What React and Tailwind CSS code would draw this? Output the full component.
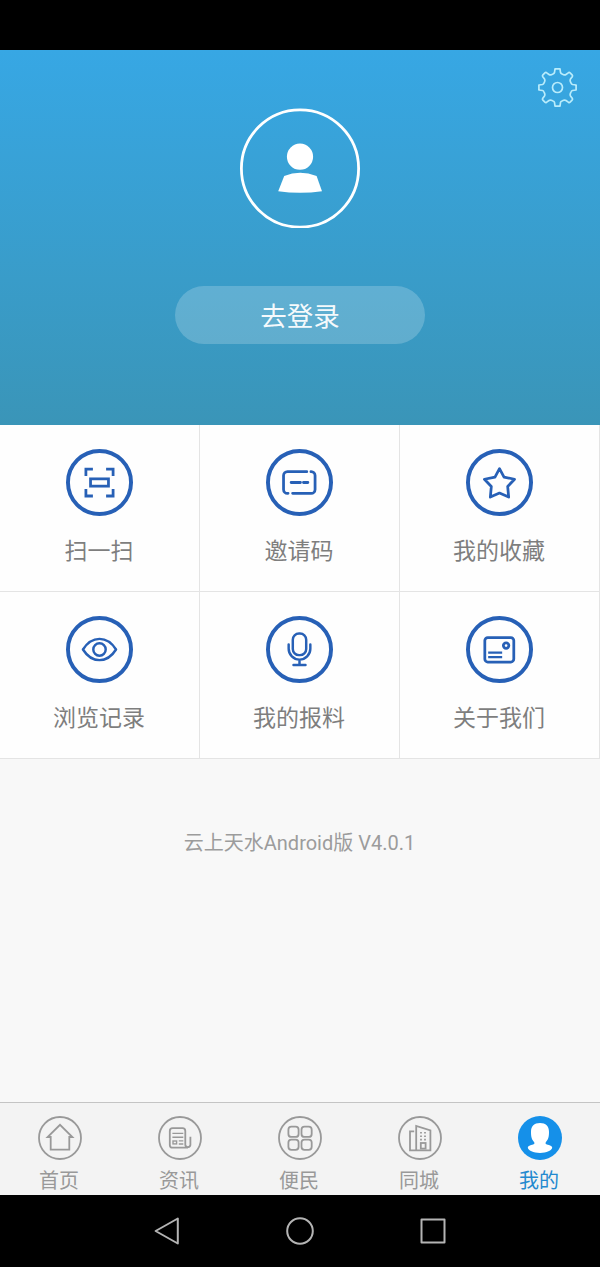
import React from 'react';

const menuItems = [
  {
    label: "扫一扫",
    icon: (
      <>
        <path d="M20.2 27.5V20.4h7.1M40.7 20.4h7.1v7.1M47.8 40.6v7.1h-7.1M27.3 47.7h-7.1v-7.1" />
        <rect x="24.9" y="30.3" width="18.2" height="7.4" />
      </>
    ),
  },
  {
    label: "邀请码",
    icon: (
      <g strokeLinecap="round">
        <path d="M41.4 23H21.8a4 4 0 0 0-4 4v14a4 4 0 0 0 4 4h.6" />
        <path d="M45.6 23h.2a4 4 0 0 1 4 4v14a4 4 0 0 1-4 4H27" />
        <path d="M25.5 34h9.5M38 34h4.5" />
      </g>
    ),
  },
  {
    label: "我的收藏",
    icon: (
      <path
        strokeLinejoin="round"
        d="M34 20l4.6 8.5 10.7 2.2-7 7.3 1 10.8-9.3-4.1-9.3 4.1 1-10.8-7-7.3 10.7-2.2z"
      />
    ),
  },
  {
    label: "浏览记录",
    icon: (
      <g strokeWidth="2.5" strokeLinejoin="round">
        <path d="M17.2 34C21 28 27 23.2 34 23.2S47 28 50.8 34C47 40 41 44.8 34 44.8S21 40 17.2 34z" />
        <circle cx="34" cy="34" r="6.3" />
      </g>
    ),
  },
  {
    label: "我的报料",
    icon: (
      <g strokeWidth="2.5" strokeLinecap="round">
        <rect x="27.2" y="17.7" width="13.6" height="22" rx="6.3" />
        <path d="M23 29v4.3a11 11 0 0 0 22 0V29M34 44.4v5.2M27.9 49.8h12.2" />
      </g>
    ),
  },
  {
    label: "关于我们",
    icon: (
      <>
        <rect x="19.1" y="21.9" width="29.4" height="24.8" rx="3" />
        <circle cx="40.7" cy="30" r="2.8" />
        <path strokeWidth="2.4" d="M22.5 37.2h14.2M22.5 41.8h14.2" />
      </>
    ),
  },
];

const tabs = [
  {
    label: "首页",
    icon: <path d="M12.7 21H9.6L22 8.8 34.4 21h-3.1v12.6H12.7z" />,
  },
  {
    label: "资讯",
    icon: (
      <>
        <path d="M30 31.7H14.6a2.8 2.8 0 0 1-2.8-2.8V15a2.8 2.8 0 0 1 2.8-2.8h9.9a2.8 2.8 0 0 1 2.8 2.8v14a2.6 2.6 0 0 0 5.1 0v-8.3" />
        <path strokeWidth="1.4" d="M14.4 17.4h10.9M14.4 21.2h10.9M20.8 24.9h4.5M20.8 28h4.5" />
        <rect strokeWidth="1.4" x="15" y="25" width="3.6" height="2.9" />
      </>
    ),
  },
  {
    label: "便民",
    icon: (
      <>
        <rect x="10.4" y="10.7" width="10.2" height="10.2" rx="3" />
        <rect x="23.5" y="10.7" width="10.2" height="10.2" rx="3" />
        <rect x="10.4" y="23.6" width="10.2" height="10.2" rx="3" />
        <rect x="23.5" y="23.6" width="10.2" height="10.2" rx="3" />
      </>
    ),
  },
  {
    label: "同城",
    icon: (
      <>
        <path d="M16.2 15.4H12v18.9h20.4V14.4L18.2 10v24.3" />
        <path strokeDasharray="1.6 1.8" d="M23 16v8.6M27 16v8.6" />
        <rect x="22.8" y="27" width="4.8" height="5.6" />
      </>
    ),
  },
  { label: "我的", active: true },
];

function GearIcon() {
  return (
    <svg viewBox="-19.5 -19.5 40 40" className="w-10 h-10" fill="none" stroke="#b9ecfb" strokeWidth="1.7" strokeLinejoin="round">
      <circle r="5" />
      {[0, 90, 180, 270].map((angle) => (
        <path
          key={angle}
          transform={`rotate(${angle})`}
          d="M-2.5-18.6h5l.5 3.6q.3 1.1 1.5 1.5l1.6.7q1.4.5 2.4-.2l2.6-1.9q.8-.4 1.5.3l2 2q.7.7.3 1.5l-1.9 2.6q-.7 1-.2 2.4l.7 1.6q.4 1.2 1.5 1.5l3.6.5v1"
        />
      ))}
    </svg>
  );
}

function MenuItem({ item }) {
  return (
    <div className="h-[167px] flex flex-col items-center pt-6 bg-[#fefefe] border-r border-b border-[#e4e4e4]">
      <svg viewBox="0 0 68 68" className="w-[67px] h-[67px] shrink-0" fill="none" stroke="#2760b6" strokeWidth="2.8">
        <circle cx="34" cy="34" r="32" strokeWidth="4" />
        {item.icon}
      </svg>
      <span className="mt-5 pr-px text-[23px] leading-8 text-[#7e7e7e]">{item.label}</span>
    </div>
  );
}

function TabItem({ tab }) {
  return (
    <div className={`flex-1 flex flex-col items-center pt-[13px] ${tab.active ? "text-[#2389cf]" : "text-[#999999]"}`}>
      {tab.active ? (
        <svg viewBox="0 0 44 44" className="w-11 h-11 shrink-0">
          <circle cx="22" cy="22" r="22" fill="#1590e9" />
          <path
            fill="#fff"
            d="M22 7c5.8 0 9 3.2 9 8.8 0 5-.6 7.6-3.2 10.4-.5 1.2-.2 1.8 1 2.2 3 .7 5.4 1.6 5.4 3.2 0 3-5.8 5.4-12.2 5.4s-12.2-2.4-12.2-5.4c0-1.6 2.4-2.5 5.4-3.2 1.2-.4 1.5-1 1-2.2C13.6 23.4 13 20.8 13 15.8 13 10.2 16.2 7 22 7z"
          />
        </svg>
      ) : (
        <svg viewBox="0 0 44 44" className="w-11 h-11 shrink-0" fill="none" stroke="#999" strokeWidth="1.8">
          <circle cx="22" cy="22" r="21" />
          {tab.icon}
        </svg>
      )}
      <span className="mt-[7px] pr-0.5 text-[20px] leading-7">{tab.label}</span>
    </div>
  );
}

function App() {
  return (
    <div className="w-full h-[1267px] flex flex-col bg-[#f8f8f8] font-[Roboto,'Noto_Sans_CJK_SC',sans-serif]">
      <div className="h-[50px] bg-black shrink-0" />

      {/* Profile header */}
      <header className="relative h-[375px] shrink-0 flex flex-col items-center bg-linear-to-b from-[#37a7e4] to-[#3a95b8]">
        <button className="absolute top-[18px] right-[22px]">
          <GearIcon />
        </button>
        <svg viewBox="0 0 120 120" className="mt-[58px] w-[120px] h-[120px]">
          <circle cx="60" cy="60.5" r="58.6" fill="none" stroke="#fff" strokeWidth="2.8" />
          <circle cx="60" cy="48.7" r="13.1" fill="#fff" />
          <path fill="#fff" d="M44.2 68Q60 61.6 76.6 68L82 83.2Q60 86.4 38.2 83.2z" />
        </svg>
        <button className="mt-[58px] pt-1 w-[250px] h-[58px] rounded-full bg-white/20 text-[26.5px] text-white/95">
          去登录
        </button>
      </header>

      <main className="flex-1">
        <div className="grid grid-cols-3">
          {menuItems.map((item) => (
            <MenuItem key={item.label} item={item} />
          ))}
        </div>
        <p className="mt-[70px] pr-px text-center text-[20px] leading-7 text-[#9c9c9c]">云上天水Android版 V4.0.1</p>
      </main>

      <nav className="h-[93px] shrink-0 flex bg-[#f3f3f3] border-t border-[#c4c4c4]">
        {tabs.map((tab) => (
          <TabItem key={tab.label} tab={tab} />
        ))}
      </nav>

      {/* System navigation */}
      <div className="h-[72px] shrink-0 bg-black flex justify-center">
        <div className="w-[400px] grid grid-cols-3 place-items-center">
          <svg viewBox="0 0 28 28" className="w-7 h-7" fill="none" stroke="#b4b4b4" strokeWidth="2" strokeLinejoin="round">
            <path d="M2.6 14L24.8 1.5v25z" />
          </svg>
          <svg viewBox="0 0 28 28" className="w-7 h-7" fill="none" stroke="#b4b4b4" strokeWidth="2">
            <circle cx="14" cy="14" r="12.8" />
          </svg>
          <svg viewBox="0 0 28 28" className="w-7 h-7" fill="none" stroke="#b4b4b4" strokeWidth="2" strokeLinejoin="round">
            <rect x="2.5" y="2.5" width="23" height="23" />
          </svg>
        </div>
      </div>
    </div>
  );
}

export default App;
